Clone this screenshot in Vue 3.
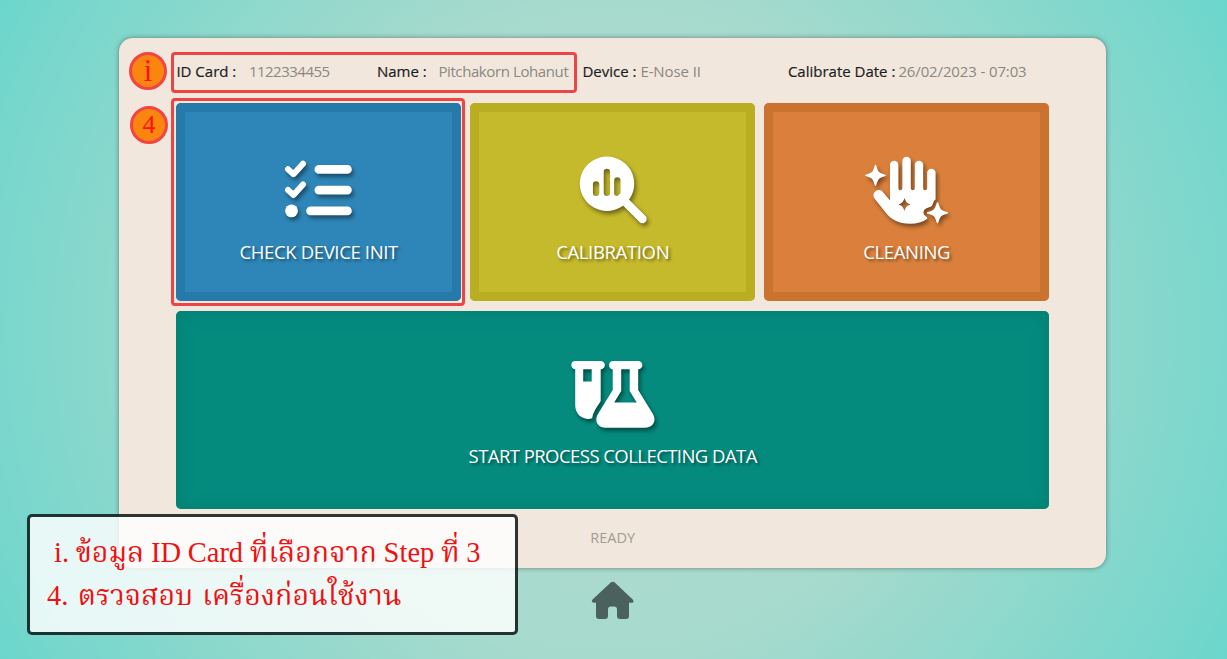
<script setup>
const info = [
  { key: 'id', label: 'ID Card :', value: '1122334455' },
  { key: 'name', label: 'Name :', value: 'Pitchakorn Lohanut' },
  { key: 'device', label: 'Device :', value: 'E-Nose II' },
  { key: 'date', label: 'Calibrate Date :', value: '26/02/2023 - 07:03' },
]
</script>

<template>
  <div class="page">
    <main class="panel">
      <header class="info">
        <template v-for="item in info" :key="item.key">
          <span><b>{{ item.label }}</b></span>
          <span><i :class="'v-' + item.key">{{ item.value }}</i></span>
        </template>
      </header>

      <section class="tiles">
        <button class="tile blue">
          <svg width="90" height="80" viewBox="273.5 150 90 80">
            <g fill="none" stroke="#fff" stroke-linecap="round" stroke-linejoin="round">
              <path stroke-width="6" d="M287.500 169.300 293 174.200 302.500 163.800M287.500 190 293 195 302.500 184.500" />
              <path stroke-width="8.600" d="M318.300 169.400H347M318.300 190.100H347M310 210.900H347" />
            </g>
            <circle cx="291" cy="210.900" r="6.400" fill="#fff" />
          </svg>
          <span class="t-check">CHECK DEVICE INIT</span>
        </button>
        <button class="tile olive">
          <svg width="90" height="80" viewBox="567.5 150 90 80">
            <path d="M621 198 642 219" stroke="#fff" stroke-width="8.300" stroke-linecap="round" />
            <path fill="#fff" fill-rule="evenodd" d="M606.500 156.500a27.200 27.200 0 1 0 .01 0ZM592.400 184.500a3.200 3.200 0 0 1 6.400 0v8.300a3.200 3.200 0 0 1-6.400 0ZM603.200 172a3.200 3.200 0 0 1 6.400 0v20.800a3.200 3.200 0 0 1-6.400 0ZM613.600 180.400a3.200 3.200 0 0 1 6.400 0v12.400a3.200 3.200 0 0 1-6.400 0Z" />
          </svg>
          <span class="t-cal">CALIBRATION</span>
        </button>
        <button class="tile orange">
          <svg width="90" height="80" viewBox="862 150 90 80">
            <path fill="#fff" fill-rule="evenodd" d="M890 200.500V165a4.200 4.200 0 0 1 8.400 0v23.200a2 2 0 0 0 4 0V161a4.200 4.200 0 0 1 8.400 0v27.200a2 2 0 0 0 4 0V165a4.200 4.200 0 0 1 8.400 0v23.200a2 2 0 0 0 4 0V173a4.200 4.200 0 0 1 8.400 0v26.500c-2.300 1.100-2.600 5.200-3.800 6.400-1.500 1.500-8.300 2-8.300 6.300s4.500 4.200 3.700 6.500c-4.500 3.300-10 5-17 5-12 0-19-4.500-24-10.500l-11.500-14.500c-4-5 2.500-11.500 7.500-7.500ZM904.500 198c-1.500 4.200-2 5-6.200 6.400 4.200 1.400 4.700 2.300 6.200 6.500 1.500-4.200 2-5.100 6.200-6.500-4.200-1.400-4.700-2.200-6.200-6.400Z" />
            <path fill="#fff" stroke="#fff" stroke-width="1.500" stroke-linejoin="round" d="M875.500 165.600c2 7 2.500 7.600 9.600 9.800-7.100 2.200-7.600 2.800-9.600 9.700-2-6.900-2.500-7.500-9.600-9.700 7.100-2.200 7.600-2.800 9.600-9.800ZM937.500 203c2 7 2.600 7.600 9.800 9.800-7.200 2.200-7.800 2.800-9.800 9.700-2-6.900-2.600-7.500-9.800-9.700 7.200-2.200 7.800-2.800 9.800-9.800Z" />
          </svg>
          <span class="t-clean">CLEANING</span>
        </button>
        <button class="tile teal">
          <svg width="100" height="80" viewBox="562.8 354 100 80">
            <path fill="#fff" fill-rule="evenodd" d="M574.500 361H600.500a4 4 0 0 1 0 8.300V401C597 407 593 411.500 592 418.300Q589 419.500 586 418.800C579 417.500 575 412 575 405V369.300a4.200 4.200 0 0 1-.5-8.300ZM583 369.300V381.500H591.500V369.300Z" />
            <path fill="#fff" fill-rule="evenodd" d="M612.500 361H638a4 4 0 0 1 0 8.300V390L653 414.500C656.500 421 652.500 427.700 645 427.700H605C597.500 427.700 594 421 597.500 414.500L612.500 390V369.300a4.200 4.200 0 0 1 0-8.300ZM621 369.300V391L614 402.500H636.500L629.500 391V369.300Z" />
          </svg>
          <span class="t-start">START PROCESS COLLECTING DATA</span>
        </button>
      </section>
      <p class="status">READY</p>
    </main>

    <svg class="home" width="44" height="40" viewBox="590 580 44 40">
      <path fill="#4b615d" d="M611 582.300q1.800-1.200 3.500 0l18.200 17.200q2.200 3-1.200 3.200H629V616q0 3-3 3h-6q-3 0-3-3v-6.500q0-3-3-3h-3q-3 0-3 3V616q0 3-3 3h-6q-3 0-3-3V602.700H594q-3.400-.2-1.500-3.200Z" />
    </svg>

    <div class="outline info-outline"></div>
    <div class="outline tile-outline"></div>
    <div class="badge one">i</div>
    <div class="badge two">4</div>
    <aside class="note">
      <div class="line first">i. ข้อมูล ID Card ที่เลือกจาก Step ที่ 3</div>
      <div class="line second">4. ตรวจสอบ เครื่องก่อนใช้งาน</div>
    </aside>
  </div>
</template>

<style>
body { margin: 0; overflow: hidden; }
</style>

<style scoped>
* { box-sizing: border-box; }
.page {
  position: relative;
  width: 1227px;
  height: 659px;
  padding: 38px 0 0 119px;
  overflow: hidden;
  background: radial-gradient(circle farthest-corner at center, #b8dccf 0%, #a5dacd 48%, #7ed7cc 85%, #6cd6cd 100%);
  font-family: "Open Sans", "Noto Sans", sans-serif;
}
.panel {
  width: 987px;
  height: 530px;
  padding: 0 57px 0 57.400px;
  border-radius: 14px;
  background: #f1e7dc;
  box-shadow: 0 0 5px rgba(70, 80, 70, .65);
}
.info {
  display: grid;
  grid-template-columns: 72.500px 128px 61.500px 144px 58px 147.500px 110.500px 1fr;
  height: 65px;
  padding-top: 23px;
  font-size: 15px;
  line-height: 20px;
  white-space: nowrap;
}
.info b { font-weight: 400; color: #1d1d1d; -webkit-text-stroke: .2px #1d1d1d; }
.info i { font-style: normal; font-weight: 400; color: #8b8782; }
.info .v-id { letter-spacing: -.5px; }
.info .v-name { letter-spacing: -.4px; }
.info .v-device { letter-spacing: -.1px; }
.info .v-date { letter-spacing: -.13px; }
.tiles {
  display: grid;
  grid-template-columns: repeat(3, 1fr);
  grid-template-rows: 198px 198px;
  gap: 10px 9.500px;
}
.tile {
  display: flex;
  flex-direction: column;
  align-items: center;
  padding: 47px 0 0;
  border: 0;
  border-radius: 5px;
  color: #fff;
  font: 400 18.500px/24px "Open Sans", "Noto Sans", sans-serif;
  text-shadow: 2px 2px 3px rgba(0, 0, 0, .45);
  white-space: nowrap;
}
.tile svg { flex: none; filter: drop-shadow(2px 3px 2px rgba(0, 0, 0, .45)); }
.tile > span { margin-top: 10px; letter-spacing: -.35px; }
.tile > .t-start { letter-spacing: -.55px; }
.blue { background: #2e86b8; box-shadow: inset 0 0 0 9px #257aaa; }
.olive { background: #c5b92c; box-shadow: inset 0 0 0 9px #b9ae22; }
.orange { background: #da803c; box-shadow: inset 0 0 0 9px #ca732f; }
.teal { grid-column: 1 / -1; padding-top: 43px; background: #048b7e; box-shadow: inset 0 0 16px #047c70; }
.status {
  margin: 17px 0 0;
  color: #a39b94;
  font-size: 14.500px;
  line-height: 24px;
  text-align: center;
}
.home { display: block; margin: 12px 0 0 471px; }
.outline {
  position: absolute;
  border: 3px solid #ed4545;
  border-radius: 4px;
}
.info-outline { left: 171px; top: 52px; width: 406px; height: 41px; }
.tile-outline { left: 171px; top: 98px; width: 294px; height: 208px; }
.badge {
  position: absolute;
  width: 38px;
  height: 38px;
  border: 3px solid #f44343;
  border-radius: 50%;
  background: #fb860f;
  color: #f11;
  font: 28px/32px "Liberation Serif", serif;
  text-align: center;
}
.one { left: 129px; top: 52px; font-size: 31px; }
.two { left: 130px; top: 106px; font-size: 26px; }
.note {
  position: absolute;
  left: 27px;
  top: 514px;
  width: 491px;
  height: 121px;
  padding: 14px 0 0 17px;
  border: 3px solid rgba(15, 25, 25, .87);
  border-radius: 5px;
  background: rgba(255, 255, 255, .82);
  background-clip: padding-box;
  color: #ef1111;
  font: 28.500px/43px "Liberation Serif", "Noto Serif Thai", "Noto Sans Thai", serif;
  white-space: nowrap;
}
.line { height: 43px; }
.first { padding-left: 7px; word-spacing: -.4px; }
.second { word-spacing: 2.200px; }
</style>
